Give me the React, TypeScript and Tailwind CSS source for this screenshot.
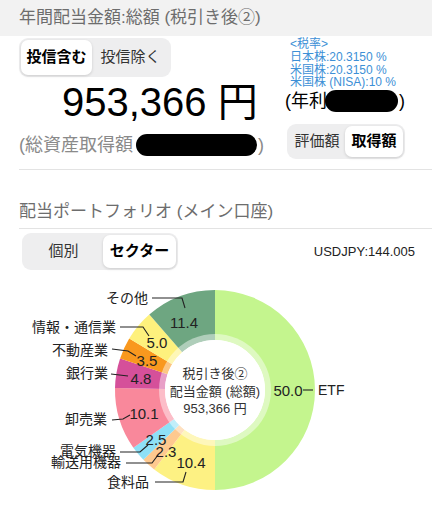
import React from "react";

const FONT = "font-[family-name:'Liberation_Sans','Noto_Sans_CJK_JP',sans-serif]";

type Seg = { v: number; c: string };
const segs: Seg[] = [
  { v: 50.0, c: "#c4f58e" },
  { v: 10.4, c: "#fdf183" },
  { v: 2.3, c: "#fec98f" },
  { v: 2.5, c: "#8ee0f6" },
  { v: 10.1, c: "#f9889b" },
  { v: 4.8, c: "#d5509a" },
  { v: 3.5, c: "#f9981e" },
  { v: 5.0, c: "#fef17d" },
  { v: 11.4, c: "#6ea681" },
];

const CX = 215;
const CY = 390;
const R1 = 100;
const R0 = 50;

function pt(r: number, a: number) {
  const rad = (a * Math.PI) / 180;
  return [CX + r * Math.sin(rad), CY - r * Math.cos(rad)];
}

function arc(a0: number, a1: number) {
  const large = a1 - a0 > 180 ? 1 : 0;
  const [x0, y0] = pt(R1, a0);
  const [x1, y1] = pt(R1, a1);
  const [x2, y2] = pt(R0, a1);
  const [x3, y3] = pt(R0, a0);
  return `M${x0},${y0} A${R1},${R1} 0 ${large} 1 ${x1},${y1} L${x2},${y2} A${R0},${R0} 0 ${large} 0 ${x3},${y3} Z`;
}

type Lbl = { name: string; nx: number; ny: number; anchor: "end" | "start"; line: string; val: string; vx: number; vy: number };
const labels: Lbl[] = [
  { name: "その他", nx: 148, ny: 298, anchor: "end", line: "152,298 182,298 185,308", val: "11.4", vx: 184, vy: 322 },
  { name: "情報・通信業", nx: 116, ny: 327, anchor: "end", line: "120,327 143,327 149,336", val: "5.0", vx: 157, vy: 342 },
  { name: "不動産業", nx: 108, ny: 350, anchor: "end", line: "112,349 128,351 136,356", val: "3.5", vx: 147, vy: 360 },
  { name: "銀行業", nx: 108, ny: 373, anchor: "end", line: "111,374 128,376", val: "4.8", vx: 141, vy: 378 },
  { name: "卸売業", nx: 107, ny: 419, anchor: "end", line: "112,420 123,419 130,415", val: "10.1", vx: 144, vy: 413 },
  { name: "電気機器", nx: 116, ny: 451, anchor: "end", line: "120,452 140,452 148,445", val: "2.5", vx: 156, vy: 439 },
  { name: "輸送用機器", nx: 121, ny: 462, anchor: "end", line: "126,463 152,463 158,455", val: "2.3", vx: 166, vy: 451 },
  { name: "食料品", nx: 149, ny: 482, anchor: "end", line: "155,482 183,482 186,472", val: "10.4", vx: 191, vy: 462 },
];

function Donut() {
  let acc = 0;
  const paths = segs.map((s, i) => {
    const a0 = (acc / 100) * 360;
    acc += s.v;
    const a1 = (acc / 100) * 360;
    return <path key={i} d={arc(a0, a1)} fill={s.c} />;
  });
  const ff = "'Liberation Sans','Noto Sans CJK JP',sans-serif";
  return (
    <svg width="432" height="242" viewBox="0 270 432 242" className="block">
      {paths}
      <circle cx={CX} cy={CY} r={56} fill="#ffffff" fillOpacity={0.45} />
      <circle cx={CX} cy={CY} r={R0} fill="#ffffff" />
      <g fontFamily={ff} fontSize="14" fill="#222">
        {labels.map((l, i) => (
          <g key={i}>
            <polyline points={l.line} fill="none" stroke="#222" strokeWidth="1.1" />
            <text x={l.nx} y={l.ny} textAnchor={l.anchor} dominantBaseline="central">{l.name}</text>
            <text x={l.vx} y={l.vy} textAnchor="middle" dominantBaseline="central" fontSize="15">{l.val}</text>
          </g>
        ))}
        <text x={288} y={390} textAnchor="middle" dominantBaseline="central" fontSize="15">50.0</text>
        <line x1={303} y1={390} x2={313} y2={390} stroke="#222" strokeWidth="1.1" />
        <text x={318} y={390} dominantBaseline="central">ETF</text>
      </g>
      <g fontFamily={ff} fontSize="13" fill="#333" textAnchor="middle">
        <text x={CX} y={373} dominantBaseline="central">税引き後②</text>
        <text x={CX} y={391} dominantBaseline="central">配当金額 (総額)</text>
        <text x={CX} y={408} dominantBaseline="central">953,366 円</text>
      </g>
    </svg>
  );
}

export default function App() {
  return (
    <div className={`w-[432px] h-[512px] overflow-hidden bg-white ${FONT}`}>
      <div className="h-[36px] bg-[#f2f2f2] flex items-center pl-[19px] text-[17px] text-[#6d6d6d]">
        年間配当金額:総額 (税引き後②)
      </div>
      <div className="flex h-[133px]">
        <div className="w-[285px] shrink-0">
          <div className="mt-[2px] ml-[19px] w-[152px] h-[39px] rounded-[9px] bg-[#eeeeef] p-[2px] flex">
            <div className="w-[71px] rounded-[7px] bg-white shadow-[0_1px_3px_rgba(0,0,0,0.15)] flex items-center justify-center text-[15px] font-semibold text-black">
              投信含む
            </div>
            <div className="flex-1 flex items-center justify-center text-[15px] text-[#333]">投信除く</div>
          </div>
          <div className="mt-[5px] pl-[62px] text-[40px] leading-[40px] text-black whitespace-nowrap">953,366 円</div>
          <div className="mt-[11px] pl-[19px] flex items-center h-[24px] text-[18px] text-[#8a8a8a] whitespace-nowrap">
            (総資産取得額
            <span className="inline-block ml-[3px] w-[121px] h-[22px] rounded-full bg-black" />
            <span className="ml-[1px]">)</span>
          </div>
        </div>
        <div className="flex-1">
          <div className="mt-[2px] pl-[5px] text-[12px] leading-[12.8px] text-[#3d8fd6] whitespace-nowrap">
            <div>&lt;税率&gt;</div>
            <div>日本株:20.3150 %</div>
            <div>米国株:20.3150 %</div>
            <div>米国株 (NISA):10 %</div>
          </div>
          <div className="-mt-[2px] flex items-center h-[28px] text-[18px] text-black whitespace-nowrap">
            (年利
            <span className="inline-block -ml-[2px] w-[73px] h-[22px] rounded-full bg-black" />
            <span className="ml-[1px]">)</span>
          </div>
          <div className="mt-[9px] ml-[2px] w-[118px] h-[35px] rounded-[9px] bg-[#eeeeef] p-[2px] flex">
            <div className="flex-1 flex items-center justify-center text-[15px] text-[#333]">評価額</div>
            <div className="w-[58px] rounded-[7px] bg-white shadow-[0_1px_3px_rgba(0,0,0,0.15)] flex items-center justify-center text-[15px] font-semibold text-black">
              取得額
            </div>
          </div>
        </div>
      </div>
      <div className="ml-[19px] h-px bg-[#e3e3e3]" />
      <div className="pt-[30px] pb-[4px] pl-[19px] text-[17px] leading-[24px] text-[#6d6d6d]">
        配当ポートフォリオ (メイン口座)
      </div>
      <div className="ml-[19px] h-px bg-[#e3e3e3]" />
      <div className="mt-[4px] flex items-center justify-between pl-[22px] pr-[17px]">
        <div className="w-[156px] h-[37px] rounded-[9px] bg-[#eeeeef] p-[2px] flex">
          <div className="flex-1 flex items-center justify-center text-[15px] text-[#333]">個別</div>
          <div className="w-[73px] rounded-[7px] bg-white shadow-[0_1px_3px_rgba(0,0,0,0.15)] flex items-center justify-center text-[15px] font-semibold text-black">
            セクター
          </div>
        </div>
        <div className="text-[13px] text-[#222]">USDJPY:144.005</div>
      </div>
      <Donut />
    </div>
  );
}
